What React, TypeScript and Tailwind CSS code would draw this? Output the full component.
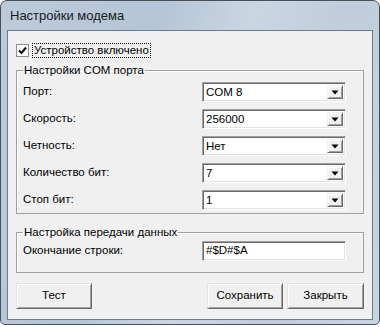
import React from "react"

const font = { fontFamily: '"Liberation Sans", Arial, sans-serif' }

function Combo({ value }: { value: string }) {
  return (
    <div className="flex h-[20px] w-[144px] items-stretch border border-t-[#a0a0a0] border-l-[#a0a0a0] border-r-white border-b-white bg-white shadow-[inset_1px_1px_0_#696969,inset_-1px_-1px_0_#e3e3e3]">
      <div className="flex flex-1 items-center pl-[3px] pt-[1px] text-[11.5px] text-black">{value}</div>
      <div className="my-[2px] mr-[2px] flex w-[16px] items-center justify-center border border-t-[#f0f0f0] border-l-[#f0f0f0] border-r-[#696969] border-b-[#696969] bg-[#f0f0f0] shadow-[inset_1px_1px_0_#fff,inset_-1px_-1px_0_#a0a0a0]">
        <svg width="8" height="5" viewBox="0 0 8 5">
          <path d="M0.5 0.5h7L4 4.5z" fill="#000" />
        </svg>
      </div>
    </div>
  )
}

function Row({ label, value }: { label: string; value: string }) {
  return (
    <div className="flex h-[20px] items-center justify-between">
      <span className="text-[11.5px] text-black">{label}</span>
      <Combo value={value} />
    </div>
  )
}

function Btn({ label, w }: { label: string; w: string }) {
  return (
    <div
      className={`${w} flex h-[26px] items-center justify-center border border-t-[#e3e3e3] border-l-[#e3e3e3] border-r-[#696969] border-b-[#696969] bg-[#f0f0f0] text-[11.5px] text-black shadow-[inset_1px_1px_0_#fff,inset_-1px_-1px_0_#a0a0a0]`}
    >
      {label}
    </div>
  )
}

export default function App() {
  const rows = [
    ["Порт:", "COM 8"],
    ["Скорость:", "256000"],
    ["Четность:", "Нет"],
    ["Количество бит:", "7"],
    ["Стоп бит:", "1"],
  ]

  return (
    <div className="h-[327px] w-[380px] bg-white" style={font}>
      <div className="flex h-[325px] w-[380px] flex-col rounded-t-[7px] rounded-b-[5px] border border-[#4a4f56] bg-[linear-gradient(105deg,#bccbdb_0%,#b4c5d7_35%,#cad6e2_55%,#bfcddc_75%,#c8d4e0_100%)] px-[6px] pb-[4px]">
        <div className="flex h-[29px] items-center pl-[3px] pt-[1px] text-[13px] text-[#1a1a1a]">Настройки модема</div>

        <div className="flex flex-1 flex-col border border-[#6a7b8d] bg-[#f0f0f0] px-[8px] pb-[10px]">
          <label className="mt-[12px] flex items-center gap-[3px]">
            <span className="flex h-[13px] w-[13px] items-center justify-center border border-[#8e8f8f] bg-white">
              <svg width="9" height="9" viewBox="0 0 9 9">
                <path d="M1 4.5l2.5 2.5L8 1.5" stroke="#111" strokeWidth="2" fill="none" />
              </svg>
            </span>
            <span className="border border-dotted border-black px-[1px] text-[11.5px] leading-[13px] text-black">Устройство включено</span>
          </label>

          <fieldset className="mt-[5px] border border-[#a0a0a0] px-[6px] pb-[3px] shadow-[inset_1px_1px_0_#fff]">
            <legend className="px-[1px] text-[11.5px] leading-[14px] text-black">Настройки COM порта</legend>
            <div className="mt-[5px] flex flex-col gap-[7px] pr-[11px]">
              {rows.map(([l, v]) => (
                <Row key={l} label={l} value={v} />
              ))}
            </div>
          </fieldset>

          <fieldset className="mt-[11px] border border-[#a0a0a0] px-[6px] pb-[11px] shadow-[inset_1px_1px_0_#fff]">
            <legend className="px-[1px] text-[11.5px] leading-[14px] text-black">Настройка передачи данных</legend>
            <div className="mt-[2px] flex h-[20px] items-center justify-between pr-[11px]">
              <span className="text-[11.5px] text-black">Окончание строки:</span>
              <div className="flex h-[20px] w-[144px] items-center border border-t-[#a0a0a0] border-l-[#a0a0a0] border-r-white border-b-white bg-white pl-[3px] text-[11.5px] text-black shadow-[inset_1px_1px_0_#696969,inset_-1px_-1px_0_#e3e3e3]">
                #$D#$A
              </div>
            </div>
          </fieldset>

          <div className="mt-auto flex items-center">
            <Btn label="Тест" w="w-[76px]" />
            <div className="flex-1" />
            <Btn label="Сохранить" w="w-[76px]" />
            <div className="w-[4px]" />
            <Btn label="Закрыть" w="w-[77px]" />
          </div>
        </div>
      </div>
    </div>
  )
}
